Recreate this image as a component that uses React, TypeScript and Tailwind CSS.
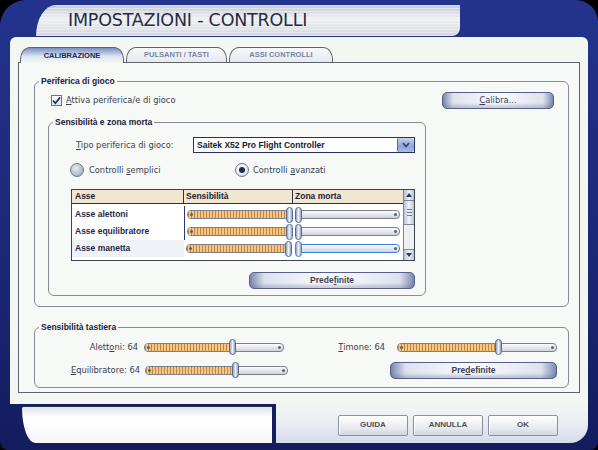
import React from "react";

const sans = "font-['DejaVu_Sans',sans-serif]";
const bold = "font-['Liberation_Sans',Arial,sans-serif] font-bold";

function U({ children }: { children: React.ReactNode }) {
  return <span className="underline underline-offset-[1px]">{children}</span>;
}

function Slider({ value, className = "", focus = false }: { value: number; className?: string; focus?: boolean }) {
  return (
    <div className={`relative flex h-[16px] items-center ${className}`}>
      <div
        className={`relative h-[9px] w-full overflow-hidden rounded-[4px] border bg-[linear-gradient(180deg,#fbfbfc,#cfd3da)] ${
          focus ? "border-[#3b82e0]" : "border-[#7a808c]"
        }`}
      >
        <div
          className="h-full bg-[repeating-linear-gradient(90deg,#c7843a_0px,#c7843a_1px,#f2c888_1px,#f2c888_3px)]"
          style={{ width: `${value}%` }}
        />
        <span className="absolute left-[2px] top-[2px] size-[3px] rounded-full bg-[#5a6478]" />
        <span className="absolute right-[2px] top-[2px] size-[3px] rounded-full bg-[#5a6478]" />
      </div>
      <div
        className={`absolute top-0 h-[16px] w-[7px] rounded-[4px] border bg-[linear-gradient(90deg,#8fa2c4,#eef2f9_50%,#8fa2c4)] ${
          focus ? "border-[#3b82e0]" : "border-[#586a90]"
        }`}
        style={{ left: `calc(${value / 100} * (100% - 7px))` }}
      />
    </div>
  );
}

function PillButton({ children, className = "" }: { children: React.ReactNode; className?: string }) {
  return (
    <button
      className={`flex h-[17px] items-center justify-center rounded-[5px] border border-[#55618a] bg-[linear-gradient(90deg,#7d8bb2,#dde2ee_9%,#fbfcfe_50%,#dde2ee_91%,#7d8bb2)] text-[#3a4052] shadow-[inset_0_-3px_3px_rgba(90,100,140,0.3)] ${className}`}
    >
      {children}
    </button>
  );
}

function Radio({ checked }: { checked?: boolean }) {
  return (
    <span
      className={`flex size-[14px] items-center justify-center rounded-full border border-[#6d7689] ${
        checked
          ? "bg-[radial-gradient(circle_at_40%_35%,#ffffff,#e6e9f0_60%,#a8b0c0)]"
          : "bg-[radial-gradient(circle_at_40%_35%,#e8ebf0,#aeb6c4_70%,#8a93a6)]"
      }`}
    >
      {checked && <span className="size-[6px] rounded-full bg-[#1f2b4d]" />}
    </span>
  );
}

function Group({ title, className = "", children }: { title: string; className?: string; children: React.ReactNode }) {
  return (
    <fieldset className={`rounded-[6px] border border-[#868b95] ${className}`}>
      <legend className={`ml-[4px] px-[2px] text-[8.5px] leading-[10px] text-[#1c2238] ${bold}`}>{title}</legend>
      {children}
    </fieldset>
  );
}

const rows = ["Asse alettoni", "Asse equilibratore", "Asse manetta"];

function AxisTable() {
  return (
    <div className="ml-[22px] mt-[12px] flex h-[72px] w-[344px] border border-[#3f4350] bg-white">
      <div className="flex flex-1 flex-col">
        <div className={`grid h-[14px] grid-cols-[112px_109px_110px] text-[8.5px] leading-[13px] text-[#1c2238] ${bold}`}>
          <div className="border-b border-r border-[#2c3048] bg-[#f1e6cf] pl-[3px]">Asse</div>
          <div className="border-b border-r border-[#2c3048] bg-[#f1e6cf] pl-[2px]">Sensibilità</div>
          <div className="border-b border-[#2c3048] bg-[#f1e6cf] pl-[2px]">Zona morta</div>
        </div>
        <div className="mt-[2px] flex flex-col">
          {rows.map((r, i) => (
            <div key={r} className="grid h-[17px] grid-cols-[112px_109px_110px] items-center">
              <div
                className={`flex h-full items-center pl-[3px] text-[8.5px] text-[#1f2a4a] ${bold} ${
                  i === 2 ? "bg-[#eef1f6]" : ""
                }`}
              >
                {r}
              </div>
              <div className={`flex h-full items-center pl-[2px] ${i < 2 ? "border-l border-[#2c3a70]" : ""}`}>
                <Slider value={100} className="w-[106px]" />
              </div>
              <div className="flex h-full items-center pl-[2px]">
                <Slider value={0} focus={i === 2} className="w-[105px]" />
              </div>
            </div>
          ))}
        </div>
      </div>
      {/* vertical scrollbar */}
      <div className="flex w-[11px] flex-col border-l border-[#7d8496] bg-[#eef0f4]">
        <div className="flex h-[11px] items-center justify-center border-b border-[#7d8496] bg-[linear-gradient(90deg,#b7c2d8,#eef2f8,#b7c2d8)]">
          <svg width="6" height="4" viewBox="0 0 6 4">
            <path d="M0 4 L3 0 L6 4 Z" fill="#2c3a60" />
          </svg>
        </div>
        <div className="flex h-[24px] flex-col items-center justify-center gap-[2px] border-b border-[#7d8496] bg-[linear-gradient(90deg,#b7c2d8,#f2f5fa,#b7c2d8)]">
          <span className="h-px w-[5px] bg-[#6f7a94]" />
          <span className="h-px w-[5px] bg-[#6f7a94]" />
          <span className="h-px w-[5px] bg-[#6f7a94]" />
        </div>
        <div className="flex-1" />
        <div className="flex h-[11px] items-center justify-center border-t border-[#7d8496] bg-[linear-gradient(90deg,#b7c2d8,#eef2f8,#b7c2d8)]">
          <svg width="6" height="4" viewBox="0 0 6 4">
            <path d="M0 0 L3 4 L6 0 Z" fill="#2c3a60" />
          </svg>
        </div>
      </div>
    </div>
  );
}

function Tab({ label, active, className = "" }: { label: string; active?: boolean; className?: string }) {
  return (
    <div
      className={`flex h-[15px] items-center justify-center rounded-tl-[10px_12px] rounded-tr-[10px_12px] border border-b-0 border-[#5e636c] text-[7.5px] ${bold} ${
        active
          ? "bg-[linear-gradient(180deg,#7890c4,#dbe3f1_55%,#f6f9f5)] text-[#202a4a]"
          : "bg-[linear-gradient(180deg,#f7f8fa,#e6e9ee)] text-[#7784a4]"
      } ${className}`}
    >
      {label}
    </div>
  );
}

function FooterButton({ label }: { label: string }) {
  return (
    <button
      className={`h-[21px] w-[70px] rounded-[2px] border border-[#8a909c] bg-[linear-gradient(180deg,#ffffff,#e9ebef_60%,#d3d7df)] text-[8px] text-[#4a5062] shadow-[inset_1px_1px_0_#ffffff] ${bold}`}
    >
      {label}
    </button>
  );
}

export default function App() {
  return (
    <div className={`h-[450px] w-[598px] overflow-hidden bg-black ${sans}`}>
      <div className="flex h-full w-full flex-col rounded-tl-[26px] rounded-tr-[22px] rounded-b-[8px] bg-[linear-gradient(180deg,#24338c,#1a2776_60%,#131c5c)]">
        {/* title strip */}
        <div className="flex h-[37px] items-start pt-[5px]">
          <div className="ml-[36px] flex h-[31px] w-[424px] items-center rounded-tl-[20px_31px] rounded-br-[8px] bg-[repeating-linear-gradient(180deg,rgba(255,255,255,0.35)_0px,rgba(255,255,255,0.35)_1px,transparent_1px,transparent_3px),linear-gradient(180deg,#c3c8d0,#eef0f3_45%,#d3d7dd)] pl-[32px]">
            <span className="text-[17.5px] leading-none tracking-[-0.2px] text-[#262c44]">IMPOSTAZIONI - CONTROLLI</span>
          </div>
        </div>

        {/* main panel */}
        <div className="mx-[10px] flex h-[367px] flex-col rounded-t-[6px] bg-[#f3f7f2] px-[8px] pt-[10px] pb-[11px]">
          <div className="flex items-end pl-[2px]">
            <Tab label="CALIBRAZIONE" active className="relative z-10 -mb-px h-[16px] w-[104px]" />
            <Tab label="PULSANTI / TASTI" className="ml-[2px] w-[101px]" />
            <Tab label="ASSI CONTROLLI" className="ml-[2px] w-[104px]" />
          </div>
          <div className="flex flex-1 flex-col border border-[#5e636c] bg-[#f6f9f5]">
            <Group title="Periferica di gioco" className="ml-[15px] mr-[10px] mt-[13px] h-[231px]">
              <div className="mt-[6px] flex h-[17px] items-center justify-between pl-[16px] pr-[14px]">
                <div className="flex items-center gap-[4px]">
                  <span className="flex size-[11px] items-center justify-center border border-[#6b7386] bg-[linear-gradient(180deg,#ffffff,#dfe3ea)]">
                    <svg width="10" height="9" viewBox="0 0 10 9">
                      <path d="M1 4.5 L3.8 7.5 L9 1" fill="none" stroke="#1f3070" strokeWidth="1.9" />
                    </svg>
                  </span>
                  <span className="text-[8.3px] text-[#3a4050]">
                    <U>A</U>ttiva periferica/e di gioco
                  </span>
                </div>
                <PillButton className={`w-[112px] text-[8.3px] ${sans}`}>
                  <span>
                    <U>C</U>alibra...
                  </span>
                </PillButton>
              </div>

              <Group title="Sensibilità e zona morta" className="ml-[13px] mt-[8px] flex h-[179px] w-[378px] flex-col">
                <div className="mt-[10px] flex h-[16px] items-center pl-[27px]">
                  <span className="w-[117px] text-[8.3px] text-[#3a4050]">
                    <U>T</U>ipo periferica di gioco:
                  </span>
                  <div className="flex h-[16px] w-[222px] border border-[#26305a] bg-white">
                    <span className={`flex-1 pl-[3px] text-[8.5px] leading-[14px] text-[#141a30] ${bold}`}>
                      Saitek X52 Pro Flight Controller
                    </span>
                    <span className="flex w-[17px] items-center justify-center rounded-[2px] border-l border-[#5a6a9a] bg-[linear-gradient(180deg,#c6d3ee,#8ea4d6_60%,#a9bbe2)]">
                      <svg width="8" height="6" viewBox="0 0 8 6">
                        <path d="M1 1 L4 4.5 L7 1" fill="none" stroke="#2b3f7a" strokeWidth="1.6" />
                      </svg>
                    </span>
                  </div>
                </div>

                <div className="mt-[10px] flex items-center pl-[21px] text-[8.3px] text-[#3a4050]">
                  <div className="flex w-[165px] items-center gap-[5px]">
                    <Radio />
                    <span>
                      Controlli <U>s</U>emplici
                    </span>
                  </div>
                  <div className="flex items-center gap-[4px]">
                    <Radio checked />
                    <span>
                      Controlli <U>a</U>vanzati
                    </span>
                  </div>
                </div>

                <AxisTable />

                <PillButton className={`mr-[10px] mt-[11px] w-[166px] self-end text-[8.5px] ${bold}`}>
                  <span>
                    Prede<U>f</U>inite
                  </span>
                </PillButton>
              </Group>
            </Group>

            <Group title="Sensibilità tastiera" className="ml-[15px] mr-[10px] mt-[15px] h-[66px]">
              <div className="mt-[7px] flex text-[8.3px] text-[#3a4050]">
                <div className="flex flex-col gap-[7px]">
                  <div className="flex items-center">
                    <span className="w-[103px] text-right">
                      Alett<U>o</U>ni: 64
                    </span>
                    <Slider value={64} className="ml-[6px] w-[140px]" />
                  </div>
                  <div className="flex items-center">
                    <span className="w-[105px] text-right">
                      <U>E</U>quilibratore: 64
                    </span>
                    <Slider value={64} className="ml-[5px] w-[143px]" />
                  </div>
                </div>
                <div className="ml-[12px] flex flex-col gap-[7px]">
                  <div className="flex items-center">
                    <span className="w-[85px] text-right">
                      <U>T</U>imone: 64
                    </span>
                    <Slider value={64} className="ml-[12px] w-[160px]" />
                  </div>
                  <PillButton className={`ml-[90px] w-[167px] text-[8.5px] ${bold}`}>
                    <span>
                      Pre<U>d</U>efinite
                    </span>
                  </PillButton>
                </div>
              </div>
            </Group>
          </div>
        </div>

        {/* footer */}
        <div className="flex h-[39px]">
          <div className="ml-[22px] mt-[2px] w-[250px] rounded-bl-[14px_37px] rounded-tl-[2px] border-t border-[#2a2f45] bg-[linear-gradient(180deg,#dfe2e8,#ffffff_30%,#f6f7fa)]" />
          <div className="ml-[4px] mr-[10px] flex flex-1 items-center justify-end gap-[5px] rounded-br-[18px] bg-[linear-gradient(180deg,#f3f7f2,#e9edf3_50%,#d4dbea)] pr-[30px] pt-[3px]">
            <FooterButton label="GUIDA" />
            <FooterButton label="ANNULLA" />
            <FooterButton label="OK" />
          </div>
        </div>
      </div>
    </div>
  );
}
